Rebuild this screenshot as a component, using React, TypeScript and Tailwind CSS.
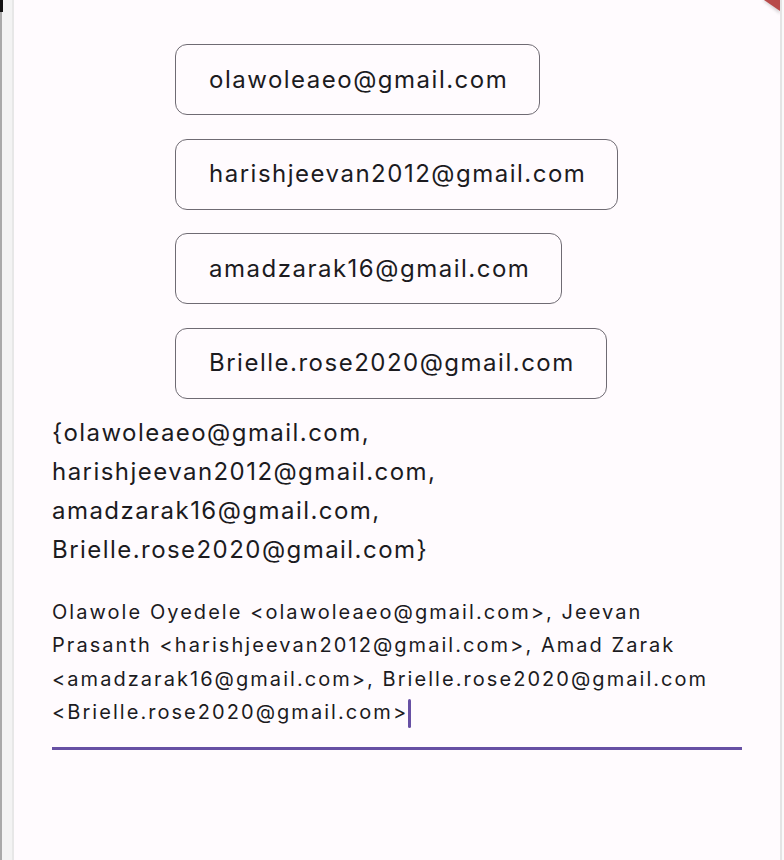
import React from "react";

const emails = [
  "olawoleaeo@gmail.com",
  "harishjeevan2012@gmail.com",
  "amadzarak16@gmail.com",
  "Brielle.rose2020@gmail.com",
];

export default function App() {
  return (
    <div
      className="relative flex h-[860px] w-[784px] overflow-hidden bg-[#fffbfe] text-[#1c1b1f]"
      style={{ fontFamily: "Inter, 'Noto Sans', sans-serif" }}
    >
      <div className="flex h-full w-[14px] shrink-0">
        <div className="h-full w-[2px] bg-[#a9a9a9]" />
        <div className="h-full w-[10px] bg-[#f3f3f3]" />
        <div className="h-full w-[2px] bg-[#e7e7e7]" />
      </div>
      <div className="absolute left-0 top-0 h-[12px] w-[3px] bg-[#111]" />

      <div className="flex h-full w-[766px] shrink-0 flex-col px-[38px]">
        <div className="mt-[44px] flex flex-col items-start gap-[23.5px] pl-[123px]">
          {emails.map((e) => (
            <div
              key={e}
              className="flex h-[71px] items-center whitespace-nowrap rounded-[12px] border-[1.5px] border-[#6f6b73] pl-[33px] pr-[31px] text-[24px] tracking-[1.5px]"
            >
              {e}
            </div>
          ))}
        </div>

        <div className="mt-[14px] whitespace-nowrap text-[24px] leading-[39px] tracking-[1.45px]">
          <div>{"{olawoleaeo@gmail.com,"}</div>
          <div>harishjeevan2012@gmail.com,</div>
          <div>amadzarak16@gmail.com,</div>
          <div>{"Brielle.rose2020@gmail.com}"}</div>
        </div>

        <div className="mt-[27px] whitespace-nowrap text-[20px] leading-[33.6px] tracking-[2.05px]">
          <div>{"Olawole Oyedele <olawoleaeo@gmail.com>, Jeevan"}</div>
          <div>{"Prasanth <harishjeevan2012@gmail.com>, Amad Zarak"}</div>
          <div>{"<amadzarak16@gmail.com>, Brielle.rose2020@gmail.com"}</div>
          <div className="flex items-center">
            <span>{"<Brielle.rose2020@gmail.com>"}</span>
            <span className="inline-block h-[29px] w-[3px] rounded-full bg-[#6750a4]" />
          </div>
        </div>
        <div className="mt-[17px] h-[3px] w-full bg-[#6750a4]" />
      </div>

      <div className="h-full w-[2px] shrink-0 bg-[#e4e4e4]" />
      <div className="h-full w-[2px] shrink-0 bg-[#fafafa]" />

      <svg
        className="absolute right-[4px] top-0"
        width="30"
        height="16"
        viewBox="0 0 30 16"
      >
        <defs>
          <filter id="s" x="-20%" y="-20%" width="140%" height="140%">
            <feGaussianBlur stdDeviation="1.5" />
          </filter>
        </defs>
        <polygon points="12,0 30,0 30,14" fill="#000" opacity="0.15" filter="url(#s)" />
        <polygon points="14,0 30,0 30,11" fill="#b84a4a" />
      </svg>
    </div>
  );
}
